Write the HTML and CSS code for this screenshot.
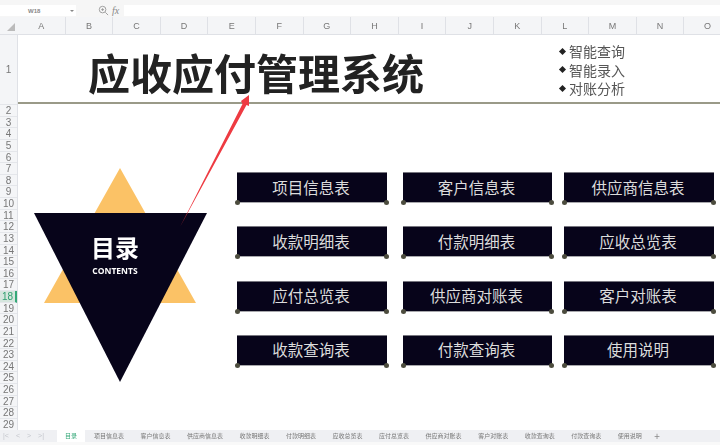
FILE: index.html
```html
<!DOCTYPE html>
<html lang="zh">
<head>
  <meta charset="UTF-8">
  <title>应收应付管理系统</title>
  <link rel="stylesheet" href="styles.css">
</head>
<body>
  <div class="toolbar">
    <div class="namebox"><span>W18</span><i class="caret"></i></div>
    <svg class="zoom-icon" width="11" height="11" viewBox="0 0 12 12"><circle cx="5" cy="5" r="3.6" fill="none" stroke="#999" stroke-width="1"/><path d="M8 8l3 3M3.500 5h3M5 3.500v3" stroke="#999" fill="none"/></svg>
    <span class="fx">fx</span>
    <div class="formula"></div>
  </div>

  <div class="colheads">
    <div class="corner"><svg width="8" height="8" viewBox="0 0 8 8"><path d="M8 0v8H0z" fill="#bbb"/></svg></div>
    <span>A</span><span>B</span><span>C</span><span>D</span><span>E</span><span>F</span><span>G</span><span>H</span><span>I</span><span>J</span><span>K</span><span>L</span><span>M</span><span>N</span><span>O</span>
  </div>

  <div class="sheet">
    <div class="rowheads">
      <span class="row-one">1</span>
      <span>2</span><span>3</span><span>4</span><span>5</span><span>6</span><span>7</span><span>8</span><span>9</span><span>10</span>
      <span>11</span><span>12</span><span>13</span><span>14</span><span>15</span><span>16</span><span>17</span>
      <span class="row-active">18</span>
      <span>19</span><span>20</span><span>21</span><span>22</span><span>23</span><span>24</span><span>25</span><span>26</span><span>27</span><span>28</span><span>29</span>
    </div>

    <div class="canvas">
      <header class="banner">
        <h1 class="title">应收应付管理系统</h1>
        <ul class="features">
          <li>智能查询</li>
          <li>智能录入</li>
          <li>对账分析</li>
        </ul>
      </header>

      <div class="menu">
        <a class="btn">项目信息表</a><a class="btn">客户信息表</a><a class="btn">供应商信息表</a>
        <a class="btn">收款明细表</a><a class="btn">付款明细表</a><a class="btn">应收总览表</a>
        <a class="btn">应付总览表</a><a class="btn">供应商对账表</a><a class="btn">客户对账表</a>
        <a class="btn">收款查询表</a><a class="btn">付款查询表</a><a class="btn">使用说明</a>
      </div>

      <!-- shapes float on the sheet -->
      <svg class="shapes" width="702" height="395" viewBox="18 35 702 395">
        <polygon points="120,168 196,303 44,303" fill="#fbc266"/>
        <polygon points="34,213 207,213 120,382" fill="#07041a"/>
        <polygon points="180,227 242.500,104 241,101 249,95 249,106 246.500,105" fill="#ee3b42"/>
      </svg>
      <div class="toc">
        <div class="toc-cn">目录</div>
        <div class="toc-en">CONTENTS</div>
      </div>
    </div>
  </div>

  <footer class="tabs">
    <div class="tab-nav"><span>|&lt;</span><span>&lt;</span><span>&gt;</span><span>&gt;|</span></div>
    <span class="tab tab-active">目录</span>
    <div class="tab-list">
      <span class="tab">项目信息表</span>
      <span class="tab">客户信息表</span>
      <span class="tab">供应商信息表</span>
      <span class="tab">收款明细表</span>
      <span class="tab">付款明细表</span>
      <span class="tab">应收总览表</span>
      <span class="tab">应付总览表</span>
      <span class="tab">供应商对账表</span>
      <span class="tab">客户对账表</span>
      <span class="tab">收款查询表</span>
      <span class="tab">付款查询表</span>
      <span class="tab">使用说明</span>
      <span class="tab-add">+</span>
    </div>
  </footer>
</body>
</html>
```

FILE: styles.css
```css
* {
  box-sizing: border-box;
}
html, body {
  margin: 0;
  height: 100%;
}
body {
  width: 720px;
  height: 445px;
  overflow: hidden;
  display: flex;
  flex-direction: column;
  background: #fff;
  color: #666;
  font-family: "Noto Sans CJK SC", "Noto Sans", sans-serif;
  filter: blur(0.45px);
}

/* formula bar */
.toolbar {
  height: 17px;
  display: flex;
  align-items: center;
  background: #f6f6f6;
  padding-top: 5px;
  padding-bottom: 1px;
}
.namebox {
  width: 76px;
  height: 11px;
  background: #fff;
  display: flex;
  align-items: center;
  justify-content: space-between;
  padding: 0 2px 0 28px;
  font-size: 6px;
  font-family: "Liberation Sans", sans-serif;
  font-weight: bold;
  color: #888;
}
.caret {
  border: 2px solid transparent;
  border-top-color: #888;
  margin-top: 2px;
}
.zoom-icon {
  margin-left: 22px;
}
.fx {
  margin-left: 3px;
  width: 12px;
  font-family: "Liberation Serif", serif;
  font-style: italic;
  font-size: 10px;
  line-height: 11px;
  color: #888;
}
.formula {
  flex: 1;
  height: 11px;
  background: #fff;
}

/* column letters */
.colheads {
  height: 18px;
  display: grid;
  grid-template-columns: 18px repeat(15, 47.6px);
  background: #f4f5f7;
  border-bottom: 1px solid #dfe1e6;
}
.colheads span {
  display: flex;
  align-items: center;
  justify-content: center;
  border-right: 1px solid #dfe1e6;
  font-size: 9px;
  font-family: "Liberation Sans", sans-serif;
  color: #777;
}
.corner {
  display: flex;
  justify-content: flex-end;
  align-items: flex-end;
  padding: 0 3px 3px 0;
}

.sheet {
  flex: 1;
  display: flex;
  min-height: 0;
}

/* row numbers */
.rowheads {
  width: 18px;
  background: #f4f5f7;
  border-right: 1px solid #dfe1e6;
  display: flex;
  flex-direction: column;
  font-family: "Liberation Sans", sans-serif;
  font-size: 10px;
  color: #777;
}
.rowheads span {
  height: 11.63px;
  line-height: 11px;
  text-align: center;
  border-bottom: 1px solid #e4e6ea;
}
.rowheads .row-one {
  height: 70px;
  line-height: 70px;
}
.rowheads .row-active {
  background: #d5e6de;
  color: #2f9e6e;
  border-right: 2px solid #35a878;
}

.canvas {
  flex: 1;
  position: relative;
  min-width: 0;
}

.banner {
  height: 69px;
  border-bottom: 2px solid #9a9a88;
  display: flex;
  padding-left: 70px;
}
.title {
  margin: 8px 0 0;
  font-size: 42px;
  line-height: 58px;
  font-weight: 700;
  color: #222;
  white-space: nowrap;
}
.features {
  list-style: none;
  margin: 7px 0 0 136px;
  padding: 0;
  font-size: 14px;
  line-height: 18.500px;
  color: #555;
}
.features li {
  display: flex;
  align-items: center;
  gap: 4px;
}
.features li::before {
  content: "";
  width: 5px;
  height: 5px;
  background: #222;
  transform: rotate(45deg);
}

.menu {
  display: grid;
  grid-template-columns: 166px 161px 150px;
  grid-auto-rows: 31px;
  row-gap: 23.300px;
  margin: 68px 0 0 219px;
}
.btn {
  position: relative;
  display: flex;
  align-items: center;
  justify-content: center;
  background: #07041a;
  border-top: 1px solid #77767f;
  border-bottom: 1px solid #a8a8ac;
  padding: 0 2px 2px 0;
  color: #dcdcdc;
  font-size: 15.500px;
}
.btn:nth-child(3n+1) {
  margin-right: 16px;
}
.btn:nth-child(3n+2) {
  margin-right: 12px;
}
.btn::before, .btn::after {
  content: "";
  position: absolute;
  bottom: -3px;
  width: 5px;
  height: 5px;
  border-radius: 50%;
  background: #4c4c3e;
}
.btn::before {
  left: -2px;
}
.btn::after {
  right: -2px;
}

.shapes {
  position: absolute;
  left: 0;
  top: 0;
}
.toc {
  position: absolute;
  left: 73px;
  top: 199px;
  width: 48px;
  text-align: center;
  color: #fff;
  font-weight: 700;
}
.toc-cn {
  font-size: 24px;
  line-height: 26px;
}
.toc-en {
  font-family: "Open Sans", sans-serif;
  font-size: 8.500px;
  line-height: 10px;
  margin-top: 6px;
}

/* sheet tabs */
.tabs {
  height: 15px;
  display: flex;
  background: #eff0f3;
  border-bottom: 3px solid #f9f9f9;
  font-size: 6px;
  line-height: 11px;
  color: #777;
  margin-top: -2px;
}
.tab-nav {
  width: 57px;
  display: flex;
  gap: 7px;
  padding-left: 3px;
  font-size: 7px;
  color: #c4c6cc;
  font-family: "Liberation Sans", sans-serif;
}
.tab {
  white-space: nowrap;
}
.tab-active {
  width: 28px;
  background: #fff;
  color: #35a878;
  text-align: center;
}
.tab-list {
  display: flex;
  gap: 16.500px;
  padding-left: 9px;
}
.tab-add {
  margin-left: -4px;
  font-size: 10px;
  color: #888;
}
```
